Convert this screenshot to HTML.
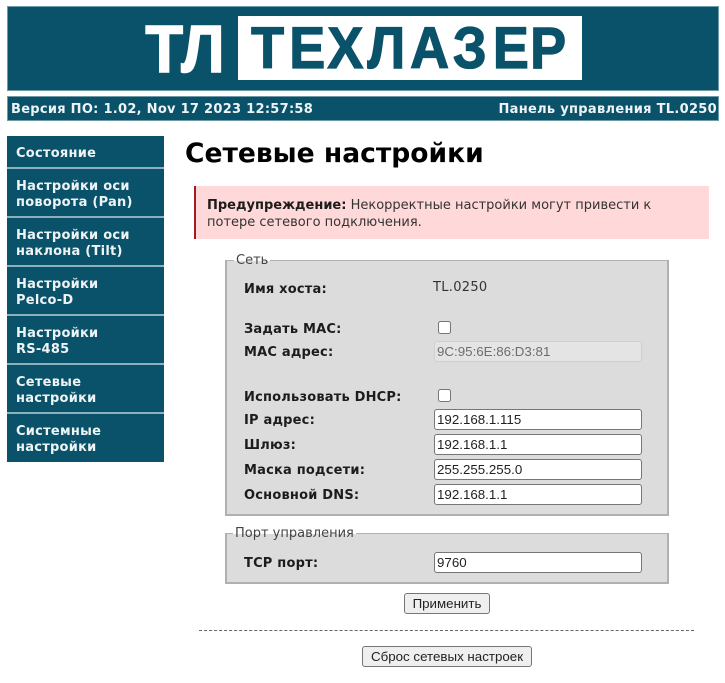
<!DOCTYPE html>
<html lang="ru"><head><meta charset="utf-8"><title>Сетевые настройки</title>
<style>
html,body{margin:0;padding:0;background:#fff;width:725px;height:683px;overflow:hidden}
body{font:13px/16px "DejaVu Sans",sans-serif;color:#222}
#w{position:absolute;left:0;top:0;width:725px;height:683px;filter:blur(.35px)}
.a{position:absolute}
.blue{background:#0a5269}
.side{left:7px;width:157px;background:#0a5269;color:#eef4f6;font-weight:bold;box-sizing:border-box;padding-left:9px;letter-spacing:.25px}
.sep{left:7px;width:157px;height:2px;background:#8eb0bd}
.lab{left:244px;font-weight:bold;color:#1c1c1c;white-space:nowrap;line-height:16px;letter-spacing:.2px}
.box{left:225px;width:444px;box-sizing:border-box;background:#dcdcdc;border:2px solid #b0b0b0;border-top-width:1px}
.leg{background:linear-gradient(#fff 50%,#dcdcdc 50%);padding:0 2px;line-height:14px;white-space:nowrap;color:#444}
.in{left:434px;width:208px;height:21px;box-sizing:border-box;background:#fff;border:1px solid #767676;border-radius:3px;font:13.33px/19px "Liberation Sans",sans-serif;color:#222;padding-left:2px}
.dis{background:#e4e4e4;border-color:#cfcfcf;color:#6d6d6d}
.cb{left:438px;width:13px;height:13px;box-sizing:border-box;background:#fff;border:1px solid #767676;border-radius:2.5px}
.btn{box-sizing:border-box;background:#efefef;border:1px solid #767676;border-radius:3px;height:21px;font:13.33px/19px "Liberation Sans",sans-serif;color:#222;text-align:center;white-space:nowrap}
</style></head><body><div id="w">
<div class="a blue" style="left:7px;top:6px;width:712px;height:85px;box-sizing:border-box;border:1px solid #6f9aa8"></div>
<div class="a" style="left:238px;top:16px;width:344px;height:64px;background:#fff"></div>
<svg class="a" style="left:0;top:0" width="725" height="100">
<text transform="scale(.92 1)" x="158 197" y="72" font-family="Liberation Sans" font-weight="bold" font-size="67" fill="#fff" stroke="#fff" stroke-width="1.6">ТЛ</text>
<text transform="scale(.93 1)" x="270 311 352 395 441 487 530 570" y="68" font-family="Liberation Sans" font-weight="bold" font-size="58" fill="#0a5269" stroke="#0a5269" stroke-width="1.3">ТЕХЛАЗЕР</text>
</svg>
<div class="a blue" style="left:7px;top:96px;width:712px;height:25px;box-sizing:border-box;border:1px solid #6f9aa8"></div>
<div class="a" style="left:11px;top:102px;color:#eef4f6;font-weight:bold;white-space:nowrap;letter-spacing:.28px">Версия ПО: 1.02, Nov 17 2023 12:57:58</div>
<div class="a" style="right:8px;top:102px;color:#eef4f6;font-weight:bold;white-space:nowrap;letter-spacing:.3px">Панель управления TL.0250</div>

<div class="a side" style="top:136px;height:326px"></div>
<div class="a side" style="top:146px;background:none">Состояние</div>
<div class="a sep" style="top:167px"></div>
<div class="a side" style="top:179px;background:none">Настройки оси<br>поворота (Pan)</div>
<div class="a sep" style="top:216px"></div>
<div class="a side" style="top:228px;background:none">Настройки оси<br>наклона (Tilt)</div>
<div class="a sep" style="top:265px"></div>
<div class="a side" style="top:277px;background:none">Настройки<br>Pelco-D</div>
<div class="a sep" style="top:314px"></div>
<div class="a side" style="top:326px;background:none">Настройки<br>RS-485</div>
<div class="a sep" style="top:363px"></div>
<div class="a side" style="top:375px;background:none">Сетевые<br>настройки</div>
<div class="a sep" style="top:412px"></div>
<div class="a side" style="top:424px;background:none">Системные<br>настройки</div>

<div class="a" style="left:185px;top:137px;font-size:26.55px;line-height:34px;font-weight:bold;color:#000;white-space:nowrap">Сетевые настройки</div>
<div class="a" style="left:194px;top:186px;width:515px;height:53px;box-sizing:border-box;background:#ffd9d9;border-left:2px solid #a01c1c"></div>
<div class="a" style="left:207px;top:197px;white-space:nowrap;line-height:17px;color:#333"><b style="color:#1c1c1c">Предупреждение:</b> Некорректные настройки могут привести к<br>потере сетевого подключения.</div>

<div class="a box" style="top:260px;height:256px"></div>
<div class="a leg" style="left:234px;top:254px">Сеть</div>
<div class="a lab" style="top:282px">Имя хоста:</div>
<div class="a" style="left:433px;top:280px;color:#333;letter-spacing:.3px">TL.0250</div>
<div class="a lab" style="top:322px">Задать MAC:</div>
<div class="a cb" style="top:321px"></div>
<div class="a lab" style="top:345px">MAC адрес:</div>
<div class="a in dis" style="top:341px">9C:95:6E:86:D3:81</div>
<div class="a lab" style="top:390px">Использовать DHCP:</div>
<div class="a cb" style="top:389px"></div>
<div class="a lab" style="top:413px">IP адрес:</div>
<div class="a in" style="top:409px">192.168.1.115</div>
<div class="a lab" style="top:438px">Шлюз:</div>
<div class="a in" style="top:434px">192.168.1.1</div>
<div class="a lab" style="top:463px">Маска подсети:</div>
<div class="a in" style="top:459px">255.255.255.0</div>
<div class="a lab" style="top:488px">Основной DNS:</div>
<div class="a in" style="top:484px">192.168.1.1</div>

<div class="a box" style="top:533px;height:51px"></div>
<div class="a leg" style="left:233px;top:527px">Порт управления</div>
<div class="a lab" style="top:556px">TCP порт:</div>
<div class="a in" style="top:552px">9760</div>

<div class="a btn" style="left:404px;top:593px;width:86px">Применить</div>
<div class="a" style="left:199px;top:630px;width:495px;border-top:1px dashed #666"></div>
<div class="a btn" style="left:362px;top:646px;width:170px">Сброс сетевых настроек</div>
</div></body></html>
